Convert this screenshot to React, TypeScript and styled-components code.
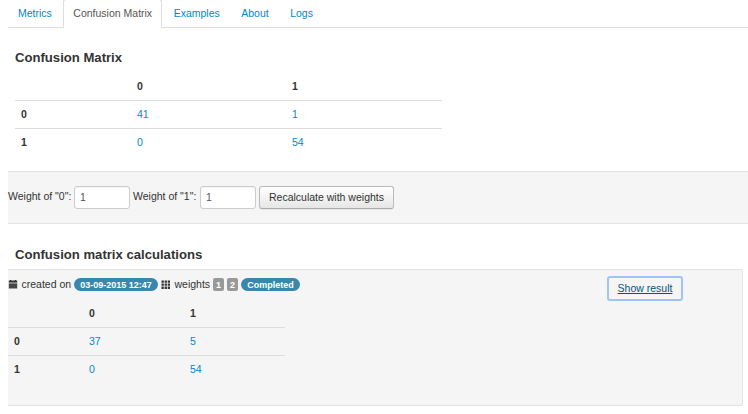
import React from 'react';
import styled, { createGlobalStyle } from 'styled-components';

const GlobalStyle = createGlobalStyle`
  *, *::before, *::after { box-sizing: border-box; }
  html, body { margin: 0; padding: 0; background: #fff; overflow: hidden; }
  body {
    font-family: "Liberation Sans", Arial, Helvetica, sans-serif;
    font-size: 10.5px;
    line-height: 16px;
    color: #333;
  }
`;

const Page = styled.main`
  height: 414px;
  padding-left: 8px;
  overflow: hidden;
`;

const Tabs = styled.nav`
  display: flex;
  gap: 1.5px;
  height: 29px;
  margin-top: -1px;
  border-bottom: 1px solid #ddd;
`;

const Tab = styled.a<{ $active?: boolean }>`
  height: 29px;
  padding: 5px 9px 0;
  border: 1px solid ${(p) => (p.$active ? '#ddd' : 'transparent')};
  border-bottom-color: ${(p) => (p.$active ? '#fff' : 'transparent')};
  border-radius: 3px 3px 0 0;
  background: ${(p) => (p.$active ? '#fff' : 'transparent')};
  background-clip: padding-box;
  color: ${(p) => (p.$active ? '#555' : '#0088cc')};
  white-space: nowrap;
`;

const Heading = styled.h4<{ $top: number; $bottom: number }>`
  margin: ${(p) => p.$top}px 0 ${(p) => p.$bottom}px 7px;
  font-size: 13.125px;
  line-height: 20px;
  font-weight: bold;
`;

const MatrixTable = styled.table<{ $width: number; $first: number; $second: number; $indent?: number }>`
  width: ${(p) => p.$width}px;
  margin-left: ${(p) => p.$indent ?? 0}px;
  table-layout: fixed;
  border-collapse: separate;
  border-spacing: 0;

  th, td {
    height: 28px;
    padding: 0 6px;
    text-align: left;
    vertical-align: middle;
  }
  th:nth-child(1) { width: ${(p) => p.$first}px; }
  th:nth-child(2) { width: ${(p) => p.$second}px; }
  tbody th, tbody td {
    padding-bottom: 2px;
    border-top: 1px solid #ddd;
  }
  td { color: #0088cc; }
`;

const WeightsForm = styled.form`
  display: flex;
  align-items: center;
  height: 53px;
  margin-top: 15px;
  border-top: 1px solid #e3e3e3;
  border-bottom: 1px solid #e3e3e3;
  background: #f5f5f5;
`;

const WeightLabel = styled.label<{ $width: number }>`
  display: flex;
  align-items: center;
  justify-content: space-between;
  width: ${(p) => p.$width}px;
  margin-right: 3px;
  white-space: nowrap;
`;

const LabelText = styled.span`
  padding-bottom: 4px;
`;

const WeightInput = styled.input`
  width: 56px;
  height: 23px;
  padding: 0 5px 1px;
  border: 1px solid #ccc;
  border-radius: 3px;
  background: #fff;
  box-shadow: inset 0 1px 1px rgba(0, 0, 0, 0.05);
  font: inherit;
  color: #555;
`;

const SubmitButton = styled.button`
  width: 135px;
  height: 23px;
  padding: 0 0 2px;
  border: 1px solid #bbb;
  border-bottom-color: #a9a9a9;
  border-radius: 3px;
  background: linear-gradient(#fff, #e6e6e6);
  box-shadow: inset 0 1px 0 rgba(255, 255, 255, 0.2), 0 1px 1px rgba(0, 0, 0, 0.05);
  font: inherit;
  color: #333;
  white-space: nowrap;
`;

const ResultPanel = styled.section`
  width: 735px;
  height: 137px;
  border: 1px solid #e3e3e3;
  border-left: 0;
  border-radius: 0 3px 3px 0;
  background: #f5f5f5;
`;

const ResultHeader = styled.div`
  display: flex;
  align-items: flex-start;
  justify-content: space-between;
  height: 29px;
  padding: 6px 59px 0 0;
`;

const Meta = styled.div`
  display: flex;
  align-items: center;
  height: 17px;
  white-space: nowrap;
`;

const MetaText = styled.span<{ $width: number }>`
  width: ${(p) => p.$width}px;
  margin-left: 3px;
  padding: 0 0 2px 0.5px;
`;

const Badge = styled.span<{ $width: number; $gap?: number; $pill?: boolean }>`
  width: ${(p) => p.$width}px;
  height: 13px;
  margin-right: ${(p) => p.$gap ?? 0}px;
  border-radius: ${(p) => (p.$pill ? 7 : 2)}px;
  background: ${(p) => (p.$pill ? '#3a87ad' : '#999')};
  color: #fff;
  font-size: 9px;
  font-weight: bold;
  line-height: 14px;
  text-align: center;
`;

const ShowResult = styled.a`
  height: 25px;
  width: 76px;
  border: 2px solid #a1c3fa;
  border-radius: 3px;
  line-height: 20px;
  text-align: center;
  text-decoration: underline;
  color: #005580;
`;

const CalendarIcon = () => (
  <svg width="10" height="10" viewBox="0 0 10 10" fill="#333">
    <path d="M2 0h1.2v.5h3.6V0H8v.5h1.2v2H.8v-2H2z" />
    <path d="M.8 2.5h8.4v1H.8z" fillOpacity=".45" />
    <path d="M.8 3.5h8.4v5H.8z" fillOpacity=".9" />
  </svg>
);

const GridIcon = () => (
  <svg width="10" height="10" viewBox="0 0 10 10" fill="#333">
    <path d="M.5 .4h2.3v2.3H.5zM3.6 .4h2.3v2.3H3.6zM6.7 .4h2.3v2.3H6.7zM.5 3.5h2.3v2.3H.5zM3.6 3.5h2.3v2.3H3.6zM6.7 3.5h2.3v2.3H6.7zM.5 6.6h2.3v2.3H.5zM3.6 6.6h2.3v2.3H3.6zM6.7 6.6h2.3v2.3H6.7z" />
  </svg>
);

type MatrixProps = { values: number[][]; width: number; first: number; second: number; indent?: number };

const Matrix = ({ values, width, first, second, indent }: MatrixProps) => (
  <MatrixTable $width={width} $first={first} $second={second} $indent={indent}>
    <thead>
      <tr><th /><th>0</th><th>1</th></tr>
    </thead>
    <tbody>
      {values.map((row, i) => (
        <tr key={i}>
          <th>{i}</th>
          {row.map((v, j) => <td key={j}>{v}</td>)}
        </tr>
      ))}
    </tbody>
  </MatrixTable>
);

export default function App() {
  return (
    <>
      <GlobalStyle />
      <Page>
        <Tabs>
          {['Metrics', 'Confusion Matrix', 'Examples', 'About', 'Logs'].map((name) => (
            <Tab key={name} $active={name === 'Confusion Matrix'}>{name}</Tab>
          ))}
        </Tabs>
        <Heading $top={20} $bottom={4}>Confusion Matrix</Heading>
        <Matrix values={[[41, 1], [0, 54]]} width={427} first={116} second={155} indent={7} />
        <WeightsForm>
          <WeightLabel $width={122}><LabelText>Weight of "0":</LabelText><WeightInput defaultValue="1" /></WeightLabel>
          <WeightLabel $width={123}><LabelText>Weight of "1":</LabelText><WeightInput defaultValue="1" /></WeightLabel>
          <SubmitButton type="button">Recalculate with weights</SubmitButton>
        </WeightsForm>
        <Heading $top={21} $bottom={4}>Confusion matrix calculations</Heading>
        <ResultPanel>
          <ResultHeader>
            <Meta>
              <CalendarIcon />
              <MetaText $width={53}>created on</MetaText>
              <Badge $width={84} $gap={3} $pill>03-09-2015 12:47</Badge>
              <GridIcon />
              <MetaText $width={39}>weights</MetaText>
              <Badge $width={11} $gap={3}>1</Badge>
              <Badge $width={11} $gap={3}>2</Badge>
              <Badge $width={59} $pill>Completed</Badge>
            </Meta>
            <ShowResult>Show result</ShowResult>
          </ResultHeader>
          <Matrix values={[[37, 5], [0, 54]]} width={277} first={75} second={101} />
        </ResultPanel>
      </Page>
    </>
  );
}
